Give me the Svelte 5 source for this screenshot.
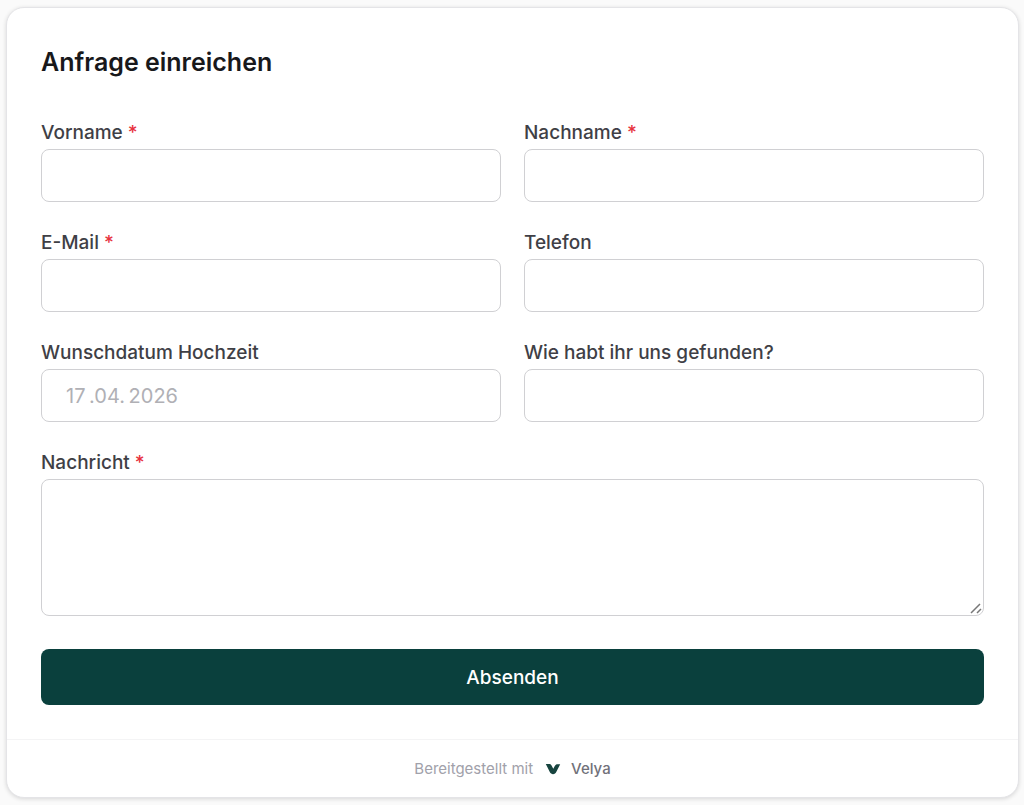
<script lang="ts">
	interface Field {
		id: string;
		label: string;
		type: string;
		required?: boolean;
		placeholder?: string;
	}

	const fields: Field[] = [
		{ id: 'firstname', label: 'Vorname', type: 'text', required: true },
		{ id: 'lastname', label: 'Nachname', type: 'text', required: true },
		{ id: 'email', label: 'E-Mail', type: 'email', required: true },
		{ id: 'phone', label: 'Telefon', type: 'tel' },
		{ id: 'date', label: 'Wunschdatum Hochzeit', type: 'text', placeholder: '17\u2009.04.\u20092026' },
		{ id: 'source', label: 'Wie habt ihr uns gefunden?', type: 'text' }
	];

	let values = $state<Record<string, string>>({});
	let message = $state('');

	function handleSubmit(e: Event) {
		e.preventDefault();
	}
</script>

<main class="card">
	<form onsubmit={handleSubmit}>
		<h1>Anfrage einreichen</h1>

		<div class="grid">
			{#each fields as field (field.id)}
				<div class="field">
					<label for={field.id}>
						{field.label}
						{#if field.required}<span class="required">*</span>{/if}
					</label>
					<input
						id={field.id}
						type={field.type}
						required={field.required}
						placeholder={field.placeholder}
						bind:value={values[field.id]}
					/>
				</div>
			{/each}

			<div class="field wide">
				<label for="message">Nachricht <span class="required">*</span></label>
				<textarea id="message" required bind:value={message}></textarea>
			</div>
		</div>

		<button type="submit">Absenden</button>
	</form>

	<footer>
		<span>Bereitgestellt mit</span>
		<a href="#velya">
			<svg viewBox="0 0 16 12" aria-hidden="true">
				<path d="M.8 1h3.400c1 0 1.700.4 2.200 1.300L8.300 5.800l1.200-2.400C10.300 1.800 11.300 1.200 12.700 1.200h2.500l-3.700 7.300C10.600 10.300 9.600 11.200 8 11.200c-1.400 0-2.400-.7-3.200-2.100z" fill="#17443f" />
			</svg>
			Velya
		</a>
	</footer>
</main>

<style>
	:global(body) {
		background: #fafafa;
		font-family: Inter, "Liberation Sans", sans-serif;
	}

	.card {
		margin: 7px 5px 8px 6px;
		background: #fff;
		border: 1px solid #e4e4e7;
		border-radius: 18px;
		box-shadow: 0 1px 4px rgba(0, 0, 0, 0.14);
	}

	form {
		padding: 34px;
	}

	h1 {
		margin: 0 0 37px;
		font-size: 25px;
		line-height: 40px;
		font-weight: 600;
		color: #18181b;
	}

	.grid {
		display: grid;
		grid-template-columns: 1fr 1fr;
		gap: 27px 23px;
	}

	.field {
		display: flex;
		flex-direction: column;
	}

	.wide {
		grid-column: 1 / -1;
	}

	label {
		font-size: 19px;
		line-height: 28px;
		margin-bottom: 2px;
		font-weight: 500;
		color: #3f3f46;
	}

	.required {
		color: #e7333f;
	}

	input,
	textarea {
		box-sizing: border-box;
		width: 100%;
		border: 1px solid #d0d0d3;
		border-radius: 8px;
		background: #fff;
		padding: 0 24px;
		font-family: inherit;
		font-size: 20px;
		color: #18181b;
	}

	input {
		height: 53px;
	}

	input::placeholder {
		color: #b0b0b5;
		opacity: 1;
	}

	textarea {
		display: block;
		height: 137px;
		padding: 12px 24px;
		resize: vertical;
	}

	textarea::-webkit-resizer {
		background: url("data:image/svg+xml,%3Csvg xmlns='http://www.w3.org/2000/svg' viewBox='0 0 15 15'%3E%3Cpath d='M3 13L12 4M9 13L13 9' stroke='%23777' stroke-width='1.5'/%3E%3C/svg%3E") center / contain no-repeat;
	}

	button {
		display: block;
		width: 100%;
		height: 56px;
		margin-top: 33px;
		border: 0;
		border-radius: 8px;
		background: #0a403d;
		color: #fff;
		font-family: inherit;
		font-size: 19px;
		font-weight: 500;
		cursor: pointer;
	}

	footer {
		display: flex;
		align-items: center;
		justify-content: center;
		gap: 12px;
		height: 57px;
		border-top: 1px solid #f4f4f5;
		font-size: 15px;
		color: #a1a1aa;
	}

	footer a {
		display: flex;
		align-items: center;
		gap: 10px;
		color: #71717a;
		font-weight: 500;
		text-decoration: none;
	}

	footer svg {
		width: 16px;
		height: 12px;
	}
</style>
